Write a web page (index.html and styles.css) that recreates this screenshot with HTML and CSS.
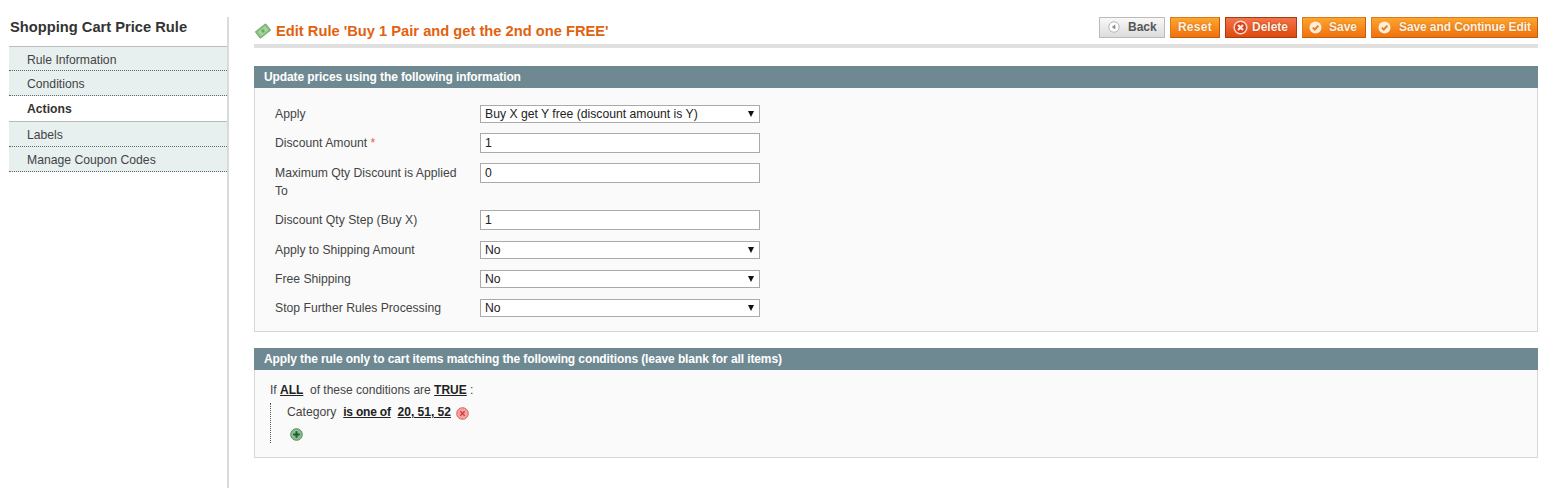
FILE: index.html
```html
<!DOCTYPE html>
<html lang="en">
<head>
    <meta charset="UTF-8">
    <meta name="viewport" content="width=device-width, initial-scale=1.0">
    <title>Edit Rule</title>
    <link rel="stylesheet" href="styles.css">
</head>
<body>
    <div class="sidebar">
        <h3>Shopping Cart Price Rule</h3>
        <ul class="tabs">
            <li>Rule Information</li>
            <li>Conditions</li>
            <li class="active">Actions</li>
            <li>Labels</li>
            <li>Manage Coupon Codes</li>
        </ul>
    </div>

    <div class="main">
        <div class="page-head">
            <h3>
                <svg class="head-icon" width="16" height="16" viewBox="0 0 16 16">
                    <rect x="1.500" y="4" width="13" height="8" rx="0.500" transform="rotate(-38 8 8)" fill="#8cc483" stroke="#74a86f"/>
                    <rect x="3.500" y="5.500" width="9" height="5" transform="rotate(-38 8 8)" fill="#a6d69c"/>
                    <circle cx="8" cy="8" r="1.700" fill="#6fa56b"/>
                </svg>
                Edit Rule 'Buy 1 Pair and get the 2nd one FREE'
            </h3>
            <div class="buttons">
                <button class="btn btn-back">
                    <svg width="12" height="12" viewBox="0 0 12 12">
                        <circle cx="6" cy="6" r="5.200" fill="#fff" stroke="#b5b5b5"/>
                        <path d="M7.300 3.500V8.500L3.800 6Z" fill="#8a8a8a"/>
                    </svg>
                    Back
                </button>
                <button class="btn btn-reset">Reset</button>
                <button class="btn btn-delete">
                    <svg width="15" height="15" viewBox="0 0 15 15">
                        <circle cx="7.500" cy="7.500" r="6.300" fill="#d8401c" stroke="#fbd9cc" stroke-width="1.500"/>
                        <path d="M5 5 10 10M10 5 5 10" stroke="#fde8df" stroke-width="2.200"/>
                    </svg>
                    Delete
                </button>
                <button class="btn btn-save">
                    <svg width="13" height="13" viewBox="0 0 13 13">
                        <circle cx="6.500" cy="6.500" r="6" fill="#fdeede"/>
                        <path d="M3.800 6.600 5.800 8.600 9.300 4.600" fill="none" stroke="#ef7d16" stroke-width="2"/>
                    </svg>
                    Save
                </button>
                <button class="btn btn-continue">
                    <svg width="13" height="13" viewBox="0 0 13 13">
                        <circle cx="6.500" cy="6.500" r="6" fill="#fdeede"/>
                        <path d="M3.800 6.600 5.800 8.600 9.300 4.600" fill="none" stroke="#ef7d16" stroke-width="2"/>
                    </svg>
                    Save and Continue Edit
                </button>
            </div>
        </div>

        <div class="panel">
            <h4>Update prices using the following information</h4>
            <div class="fieldset">
                <div class="row row-select">
                    <label>Apply</label>
                    <div class="select"><select><option>Buy X get Y free (discount amount is Y)</option></select></div>
                </div>
                <div class="row">
                    <label>Discount Amount <span class="required">*</span></label>
                    <input type="text" value="1">
                </div>
                <div class="row">
                    <label>Maximum Qty Discount is Applied To</label>
                    <input type="text" value="0">
                </div>
                <div class="row row-step">
                    <label>Discount Qty Step (Buy X)</label>
                    <input type="text" value="1">
                </div>
                <div class="row row-select">
                    <label>Apply to Shipping Amount</label>
                    <div class="select"><select><option>No</option></select></div>
                </div>
                <div class="row row-select">
                    <label>Free Shipping</label>
                    <div class="select"><select><option>No</option></select></div>
                </div>
                <div class="row row-select">
                    <label>Stop Further Rules Processing</label>
                    <div class="select"><select><option>No</option></select></div>
                </div>
            </div>
        </div>

        <div class="panel">
            <h4>Apply the rule only to cart items matching the following conditions (leave blank for all items)</h4>
            <div class="fieldset conditions">
                <p>If <a>ALL</a> &nbsp;of these conditions are <a>TRUE</a> :</p>
                <ul class="rule-tree">
                    <li>Category &nbsp;<a class="op">is one of</a> &nbsp;<a>20, 51, 52</a>
                        <svg class="cond-icon" width="13" height="13" viewBox="0 0 13 13">
                            <circle cx="6.500" cy="6.500" r="5.800" fill="#f3a3a0" stroke="#d9605c"/>
                            <path d="M4.300 4.300 8.700 8.700M8.700 4.300 4.300 8.700" stroke="#c9403c" stroke-width="1.300"/>
                        </svg>
                    </li>
                    <li class="add">
                        <svg width="13" height="13" viewBox="0 0 13 13">
                            <circle cx="6.500" cy="6.500" r="5.800" fill="#8dbd92" stroke="#4f8a5b"/>
                            <path d="M6.500 3.200V9.800M3.200 6.500H9.800" stroke="#1f5e2e" stroke-width="2"/>
                        </svg>
                    </li>
                </ul>
            </div>
        </div>
    </div>
</body>
</html>
```

FILE: styles.css
```css
* {
    box-sizing: border-box;
}
body {
    font-family: "Liberation Sans", Arial, sans-serif;
    font-size: 12.2px;
    color: #444;
    margin: 0;
    padding: 17px 9px 0;
    min-height: 100vh;
    display: flex;
    flex-direction: row;
    background-color: #fff;
}
.sidebar {
    width: 220px;
    flex-shrink: 0;
    margin-right: 25px;
    border-right: 2px solid #d8dcdc;
}
.sidebar h3 {
    font-size: 14.7px;
    color: #333;
    margin: 0;
    padding: 2px 0 0 1px;
    height: 29px;
}
.tabs {
    list-style: none;
    margin: 0;
    padding: 0;
}
.tabs li {
    height: 25px;
    line-height: 26px;
    padding-left: 18px;
    background-color: #e7efef;
    border-bottom: 1px dotted #5a6a6a;
}
.tabs li:first-child {
    border-top: 1px solid #bbb;
}
.tabs li.active {
    height: 26px;
    background-color: #fff;
    font-weight: bold;
    color: #333;
    border-bottom: 1px solid #bbb;
}
.main {
    flex-grow: 1;
    min-width: 0;
}
.page-head {
    display: flex;
    justify-content: space-between;
    align-items: flex-start;
    height: 31px;
    border-bottom: 4px solid #dfdfdf;
    margin-bottom: 18px;
}
.page-head h3 {
    font-size: 14.7px;
    color: #e2610e;
    margin: 0;
    padding: 6px 0 0 1px;
    display: flex;
    align-items: center;
    gap: 5px;
}
.head-icon {
    flex-shrink: 0;
}
.buttons {
    display: flex;
    gap: 5px;
}
.btn {
    font-family: inherit;
    font-size: 12px;
    font-weight: bold;
    height: 21px;
    padding: 0 7px 1px;
    display: flex;
    align-items: center;
    white-space: nowrap;
    color: #fdf0e0;
    text-shadow: 0 0 2px #c96a10;
    border: 1px solid #d97a1c;
    border-bottom-color: #b85f10;
    border-right-color: #b85f10;
    background: linear-gradient(#fda52e, #f1710f);
}
.btn svg {
    flex-shrink: 0;
}
.btn-back {
    width: 66px;
    padding-left: 8px;
    gap: 8px;
    color: #555;
    text-shadow: none;
    border: 1px solid #bbb;
    background: linear-gradient(#f8f8f8, #dcdcdc);
}
.btn-reset {
    width: 50px;
    justify-content: center;
    letter-spacing: 0.3px;
}
.btn-delete {
    width: 72px;
    gap: 4px;
    text-shadow: 0 0 2px #a8350c;
    border-color: #a53d10;
    background: linear-gradient(#f4734a, #de4a0c);
}
.btn-save {
    width: 64px;
    padding-left: 6px;
    gap: 7px;
}
.btn-continue {
    width: 167px;
    padding-left: 6px;
    padding-right: 0;
    gap: 8px;
    letter-spacing: -0.1px;
}
.panel {
    margin-bottom: 16px;
}
.panel h4 {
    margin: 0;
    height: 22px;
    line-height: 22px;
    padding-left: 10px;
    font-size: 12px;
    letter-spacing: -0.1px;
    color: #fff;
    background-color: #6f8992;
}
.fieldset {
    background-color: #fafafa;
    border: 1px solid #d6d6d6;
    border-top: none;
    padding: 17px 20px 5px;
    height: 244px;
}
.row {
    display: flex;
    align-items: flex-start;
    margin-bottom: 10px;
}
.row-step {
    margin-bottom: 11px;
}
.row-select {
    margin-bottom: 11px;
}
.row-select:first-child {
    margin-bottom: 10px;
}
.row label {
    width: 205px;
    padding: 1px 15px 0 0;
    line-height: 18px;
    flex-shrink: 0;
}
.row-select label {
    padding-top: 0;
}
.required {
    color: #e8604a;
}
.row input {
    width: 280px;
    height: 20px;
    border: 1px solid #aaa;
    background-color: #fff;
    padding: 0 4px;
    font: inherit;
    color: #222;
    outline: none;
}
.select {
    position: relative;
    width: 280px;
    height: 18px;
}
.select select {
    appearance: none;
    display: block;
    width: 100%;
    height: 18px;
    border: 1px solid #aaa;
    border-radius: 0;
    background-color: #fff;
    padding: 0 4px;
    font: inherit;
    color: #222;
    outline: none;
}
.select::after {
    content: "";
    position: absolute;
    right: 6px;
    top: 6px;
    border-left: 3px solid transparent;
    border-right: 3px solid transparent;
    border-top: 6px solid #111;
}
.conditions {
    height: 88px;
    padding: 11px 15px 0;
}
.conditions p {
    margin: 0;
    line-height: 18px;
    font-size: 12px;
}
.conditions a {
    font-weight: bold;
    font-size: 12px;
    color: #222;
    text-decoration: underline;
}
.conditions a.op {
    letter-spacing: -0.2px;
}
.rule-tree {
    list-style: none;
    margin: 4px 0 0;
    padding: 0 0 0 16px;
    border-left: 1px dotted #555;
    height: 40px;
}
.rule-tree li {
    height: 22px;
    line-height: 18px;
}
.rule-tree .add {
    padding: 3px 0 0 3px;
}
.cond-icon {
    margin-left: 2px;
    vertical-align: -4px;
}
```
